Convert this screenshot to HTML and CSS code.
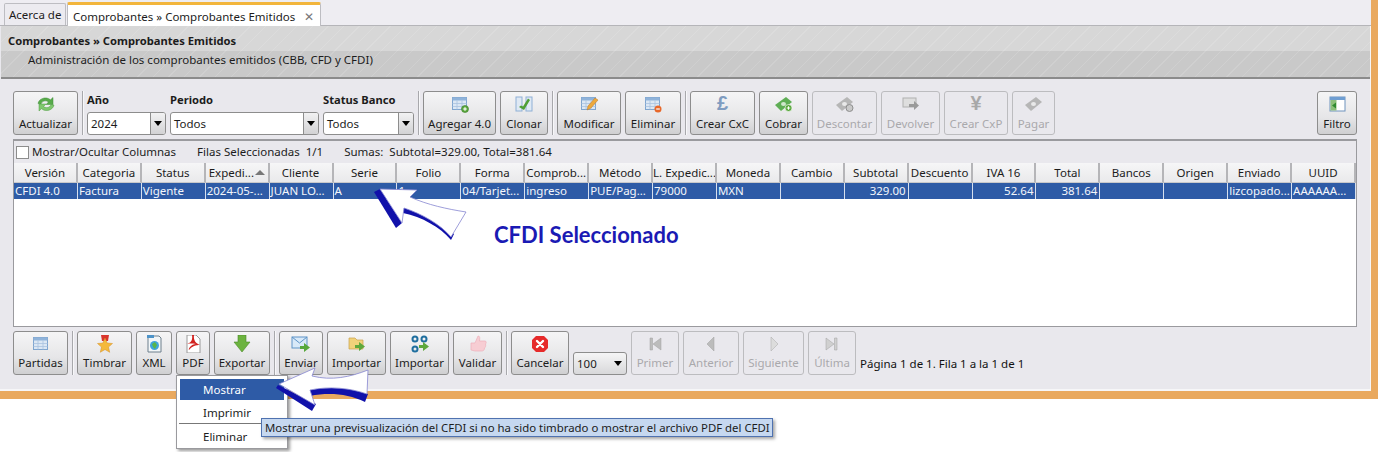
FILE: index.html
```html
<!DOCTYPE html>
<html lang="es">
<head>
<meta charset="utf-8">
<title>Comprobantes Emitidos</title>
<link rel="stylesheet" href="styles.css">
</head>
<body>
<div class="app">
  <div class="tabs">
    <div class="tab">Acerca de</div>
    <div class="tab active">Comprobantes » Comprobantes Emitidos <span class="close">✕</span></div>
  </div>
  <div class="head">
    <div class="head-title">Comprobantes » Comprobantes Emitidos</div>
    <div class="head-sub">Administración de los comprobantes emitidos (CBB, CFD y CFDI)</div>
  </div>

  <div class="toolbar top">
    <div class="btn w65"><svg class="ic" viewBox="0 0 20 18"><path d="M2 8.500C3 3.500 10 1 14.500 4.800L17 2.500V9.500H10L12.500 7C9.500 4.800 6 6 5 9z" fill="#58ab4b" stroke="#3f8c38" stroke-width=".5"/><path d="M18 10C17 15 10 17.500 5.500 13.700L3 16V9H10L7.500 11.500C10.500 13.700 14 12.500 15 9.500z" fill="#7fc86e" stroke="#4f9c42" stroke-width=".5"/></svg><span>Actualizar</span></div>
    <div class="sep"></div>
    <div class="field w79"><label>Año</label><div class="combo"><span>2024</span><i></i></div></div>
    <div class="field w149"><label>Periodo</label><div class="combo"><span>Todos</span><i></i></div></div>
    <div class="field w91"><label>Status Banco</label><div class="combo"><span>Todos</span><i></i></div></div>
    <div class="sep"></div>
    <div class="btn w73"><svg class="ic" viewBox="0 0 20 18"><use href="#tbl"/><circle cx="15" cy="14" r="3.500" fill="#5aa83e" stroke="#3c7d28" stroke-width=".6"/><path d="M13.200 14h3.600M15 12.200v3.600" stroke="#fff" stroke-width="1.200"/></svg><span>Agregar 4.0</span></div>
    <div class="btn w48"><svg class="ic" viewBox="0 0 20 18"><rect x="2" y="2" width="6" height="14" fill="#dfe9f4" stroke="#8fb0d6"/><rect x="12" y="2" width="6" height="14" fill="#dfe9f4" stroke="#8fb0d6"/><path d="M5 12l2-1.500 2 1 5-8 2 1.500-6 10z" fill="#4e9f35"/></svg><span>Clonar</span></div>
    <div class="sep"></div>
    <div class="btn w64"><svg class="ic" viewBox="0 0 20 18"><use href="#tbl"/><path d="M8 15l1-4 7-8 3 2-7 8z" fill="#eda93c" stroke="#b8772a" stroke-width=".5"/></svg><span>Modificar</span></div>
    <div class="btn w56"><svg class="ic" viewBox="0 0 20 18"><use href="#tbl"/><circle cx="15" cy="14" r="3.500" fill="#e8682a"/><path d="M13.200 14h3.600" stroke="#fff" stroke-width="1.200"/></svg><span>Eliminar</span></div>
    <div class="sep"></div>
    <div class="btn w65"><span class="cur">£</span><span>Crear CxC</span></div>
    <div class="btn w49"><svg class="ic" viewBox="0 0 20 18"><use href="#bill" fill="#5fae55"/><circle cx="14.500" cy="13" r="3.500" fill="#5aa83e" stroke="#fff" stroke-width=".6"/><path d="M12.800 13h3.400M14.500 11.300v3.400" stroke="#fff"/></svg><span>Cobrar</span></div>
    <div class="btn off w65"><svg class="ic" viewBox="0 0 20 18"><use href="#bill" fill="#b6b6b6"/><circle cx="14.500" cy="13" r="3.500" fill="#c9c9c9" stroke="#8e8e8e"/></svg><span>Descontar</span></div>
    <div class="btn off w59"><svg class="ic" viewBox="0 0 20 18"><rect x="2" y="3" width="13" height="9" fill="#dedede" stroke="#b0b0b0"/><path d="M8 9h5V6l5 4.500-5 4.500v-3H8z" fill="#9a9a9a"/></svg><span>Devolver</span></div>
    <div class="btn off w64"><span class="cur gray">¥</span><span>Crear CxP</span></div>
    <div class="btn off w43"><svg class="ic" viewBox="0 0 20 18"><use href="#bill" fill="#b6b6b6"/></svg><span>Pagar</span></div>
    <div class="btn w40 push"><svg class="ic" viewBox="0 0 20 18"><rect x="3" y="2" width="15" height="14" fill="#fff" stroke="#6f93bd"/><rect x="3" y="2" width="15" height="3" fill="#6f9ed2"/><rect x="3.500" y="5" width="6" height="10.500" fill="#8dc07a"/><path d="M9 7.500v6L5 10.500z" fill="#2f8a2f"/></svg><span>Filtro</span></div>
  </div>

  <div class="panel">
    <div class="filter">
      <span class="check"></span><span class="flabel">Mostrar/Ocultar Columnas</span>
      <span>Filas Seleccionadas&nbsp; 1/1</span>
      <span>Sumas:&nbsp; Subtotal=329.00, Total=381.64</span>
    </div>
    <div class="grid hdr">
      <div>Versión</div><div>Categoria</div><div>Status</div><div class="sort">Expedi...<i></i></div><div>Cliente</div><div>Serie</div><div>Folio</div><div>Forma</div><div>Comprob...</div><div>Método</div><div>L. Expedic...</div><div>Moneda</div><div>Cambio</div><div>Subtotal</div><div>Descuento</div><div>IVA 16</div><div>Total</div><div>Bancos</div><div>Origen</div><div>Enviado</div><div>UUID</div>
    </div>
    <div class="grid row">
      <div>CFDI 4.0</div><div>Factura</div><div>Vigente</div><div>2024-05-...</div><div>JUAN LO...</div><div>A</div><div>1</div><div>04/Tarjet...</div><div>ingreso</div><div>PUE/Pag...</div><div>79000</div><div>MXN</div><div></div><div class="num">329.00</div><div></div><div class="num">52.64</div><div class="num">381.64</div><div></div><div></div><div>lizcopado...</div><div>AAAAAA...</div>
    </div>
  </div>

  <div class="toolbar bottom">
    <div class="btn w55"><svg class="ic" viewBox="0 0 20 18"><use href="#tbl"/></svg><span>Partidas</span></div>
    <div class="sep"></div>
    <div class="btn w55"><svg class="ic" viewBox="0 0 20 18"><path d="M6 0h8l-1 6H7z" fill="#d9352c"/><path d="M10 3l2.200 5 5.300.5-4 3.500 1.200 5.300L10 14.500l-4.700 2.800L6.500 12l-4-3.500L7.800 8z" fill="#f4b93a" stroke="#d58f24" stroke-width=".5"/></svg><span>Timbrar</span></div>
    <div class="btn w36"><svg class="ic" viewBox="0 0 20 18"><path d="M4 1h11l2 2v14H4z" fill="#f2f6f8" stroke="#6d7f8c"/><circle cx="10.500" cy="10.500" r="4.500" fill="#3ea5dc"/><path d="M8 9l3-2 2 3-2 4-2-2z" fill="#58b64a"/><rect x="3" y="0" width="7" height="3" fill="#4d93c8"/></svg><span>XML</span></div>
    <div class="btn w34"><svg class="ic" viewBox="0 0 20 18"><path d="M4 0h9l4 4v14H4z" fill="#fff" stroke="#9a9a9a"/><path d="M3 8c4 1 7-2 6-8h2c-1 6 3 9 6 10-4 0-8 1-11 5-1-1 2-6 7-6-4-1-7 0-10-1z" fill="#d2231f"/></svg><span>PDF</span></div>
    <div class="btn w56"><svg class="ic" viewBox="0 0 20 18"><path d="M6 0h8v7h4l-8 10L2 7h4z" fill="#6cb33f" stroke="#4b8a2a" stroke-width=".6"/></svg><span>Exportar</span></div>
    <div class="sep"></div>
    <div class="btn w44"><svg class="ic" viewBox="0 0 20 18"><rect x="1" y="2" width="15" height="11" fill="#d8e9f8" stroke="#5e94c7"/><path d="M1 2l7.500 6L16 2" fill="none" stroke="#5e94c7"/><path d="M9 11h4V8l6 4.500L13 17v-3H9z" fill="#57a83c"/></svg><span>Enviar</span></div>
    <div class="btn w59"><svg class="ic" viewBox="0 0 20 18"><path d="M2 3h6l2 2h6v9H2z" fill="#f0d27a" stroke="#c8a04a" stroke-width=".7"/><path d="M8 10h4V7l6 4.500L12 16v-3H8z" fill="#5fa83c"/></svg><span>Importar</span></div>
    <div class="btn w59"><svg class="ic" viewBox="0 0 20 18"><g fill="none" stroke="#1f6f9f" stroke-width="2"><circle cx="5" cy="4" r="2.500"/><circle cx="14" cy="4" r="2.500"/><circle cx="5" cy="14" r="2.500"/></g><path d="M9 10h4V7l6 4.500L13 16v-3H9z" fill="#5fa83c"/></svg><span>Importar</span></div>
    <div class="btn w49"><svg class="ic" viewBox="0 0 20 18"><path d="M3 8h4l3-7c2 0 2 2 1.500 5H17c1.500 0 1.500 2 .5 3 .5 2 0 3-1 4 0 2-1 3-3 3H7l-4-1z" fill="#f7cdd3" stroke="#eeb0ba" stroke-width=".7"/></svg><span>Validar</span></div>
    <div class="sep"></div>
    <div class="btn w58"><svg class="ic" viewBox="0 0 20 18"><path d="M6 1h8l4 4v8l-4 4H6l-4-4V5z" fill="#e62a2a"/><path d="M7 6l6 6M13 6l-6 6" stroke="#fff" stroke-width="2.400" stroke-linecap="round"/></svg><span>Cancelar</span></div>
    <div class="combo page"><span>100</span><i></i></div>
    <div class="btn off w48"><svg class="ic" viewBox="0 0 20 18"><path d="M5 3h2.500v12H5zM16 3v12L8 9z" fill="#bcbcbc" stroke="#a0a0a0" stroke-width=".5"/></svg><span>Primer</span></div>
    <div class="btn off w56"><svg class="ic" viewBox="0 0 20 18"><path d="M13 2v14L6 9z" fill="#bcbcbc" stroke="#a0a0a0" stroke-width=".5"/></svg><span>Anterior</span></div>
    <div class="btn off w61"><svg class="ic" viewBox="0 0 20 18"><path d="M7 2v14l7-7z" fill="#dcdcdc" stroke="#a8a8a8" stroke-width=".5"/></svg><span>Siguiente</span></div>
    <div class="btn off w48"><svg class="ic" viewBox="0 0 20 18"><path d="M15 3h-2.500v12H15zM4 3v12l8-6z" fill="#d0d0d0" stroke="#a0a0a0" stroke-width=".5"/></svg><span>Última</span></div>
    <div class="pageinfo">Página 1 de 1. Fila 1 a la 1 de 1</div>
  </div>
</div>

<div class="menu">
  <div class="mi on">Mostrar</div>
  <div class="mi">Imprimir</div>
  <div class="mline"></div>
  <div class="mi">Eliminar</div>
</div>
<div class="tip">Mostrar una previsualización del CFDI si no ha sido timbrado o mostrar el archivo PDF del CFDI</div>
<div class="callout">CFDI Seleccionado</div>

<svg class="arrows" viewBox="0 0 1378 452" width="1378" height="452">
  <defs>
    <symbol id="tbl" viewBox="0 0 20 18"><rect x="2.500" y="2.500" width="14" height="12" fill="#dbe7f4" stroke="#7fa5cf"/><rect x="2.500" y="2.500" width="14" height="3" fill="#8fb3da"/><path d="M2.500 8.500h14M2.500 11.500h14M7 5.500v9M12 5.500v9" stroke="#a9c3e0" stroke-width=".8"/></symbol>
    <symbol id="bill" viewBox="0 0 20 18"><path d="M1 10L12 2L18 7L7 16Z"/><ellipse cx="9.500" cy="9" rx="2.500" ry="2" fill="#fff" opacity=".7"/></symbol>
  </defs>
  <path d="M374 192L380 189L402 223L396 228Z" fill="#1111aa"/>
  <path d="M403 207C422 213 442 222 454 234L451 240C440 227 422 217 403 213Z" fill="#1111aa"/>
  <path d="M380 189L417 190L410 197C428 205 447 209 466 212L451 237C440 224 422 214 404 208L402 223Z" fill="#fff" stroke="#8585d0" stroke-width=".8"/>
  <path d="M278 385L316 404L312 411L276 388Z" fill="#1111aa"/>
  <path d="M310 390C330 385 352 388 368 394L365 402C348 394 330 392 310 396Z" fill="#1111aa"/>
  <path d="M279 384L315 368L312 376C332 381 350 377 368 370L367 394C350 388 330 386 310 390L315 405Z" fill="#fff" stroke="#8585d0" stroke-width=".8"/>
</svg>
</body>
</html>
```
FILE: styles.css
```css
* { box-sizing: border-box; }
html, body { margin: 0; padding: 0; }
body {
  width: 1378px;
  height: 452px;
  overflow: hidden;
  background: #fff;
  position: relative;
  font: 11.500px/16px "Noto Sans", "Liberation Sans", sans-serif;
  color: #1c1c1c;
}
.app {
  width: 1378px;
  height: 399px;
  background: #e9e8ed;
  border-right: 7px solid #e9a95f;
  border-bottom: 8px solid #e9a95f;
  box-shadow: inset -1px -2px 0 #f6f6f8;
}
.tabs {
  height: 26px;
  padding: 2px 0 0 4px;
  display: flex;
  align-items: flex-end;
  gap: 1px;
  background: #eeedf2;
  border-bottom: 1px solid #b5b5b9;
}
.tab {
  height: 22px;
  padding: 3px 4px 0;
  width: 62px;
  white-space: nowrap;
  background: #ecebf0;
  border: 1px solid #bdbdc2;
  border-bottom: 0;
  border-radius: 2px 2px 0 0;
}
.tab.active {
  width: 254px;
  height: 24px;
  padding: 4px 5px 0;
  background: #fff;
  border-top: 3px solid #f2b53c;
  position: relative;
  top: 1px;
}
.close { color: #777; margin-left: 6px; font-size: 12px; }
.head {
  height: 53px;
  margin-right: 1px;
  margin-left: 1px;
  border-bottom: 2px solid #8b8b8b;
  background:
    repeating-linear-gradient(135deg, rgba(255,255,255,.12) 0 1px, rgba(255,255,255,0) 1px 11px),
    linear-gradient(#d7d7d7 0 49%, #c9c9c9 49% 100%);
}
.head-title { padding: 7px 0 0 7px; font-weight: 700; font-size: 11.200px; line-height: 16px; }
.head-sub { padding: 3px 0 0 27px; line-height: 16px; }
.toolbar { display: flex; gap: 4px; padding-left: 13px; padding-right: 14px; }
.toolbar.top { margin-top: 12px; height: 44px; }
.toolbar.bottom { margin-top: 4px; height: 44px; }
.sep { width: 1px; background: #a8a8ac; box-shadow: 1px 0 0 #f7f7f9; }
.btn {
  height: 44px;
  flex: none;
  display: flex;
  flex-direction: column;
  align-items: center;
  justify-content: flex-end;
  padding-bottom: 2px;
  border: 1px solid #8d8d8d;
  border-radius: 3px;
  background: linear-gradient(#f5f5f6, #e6e6e8 60%, #cfcfd1);
  white-space: nowrap;
  position: relative;
}
.btn.off {
  background: transparent;
  border-color: #bcbcbf;
  color: #a9a9ac;
}
.toolbar.bottom .btn { padding-bottom: 3px; }
.ic { position: absolute; top: 3px; left: 50%; margin-left: -10px; width: 20px; height: 18px; }
.cur {
  position: absolute;
  top: 0;
  left: 0;
  right: 0;
  text-align: center;
  font: 700 20px/22px "Liberation Sans", sans-serif;
  color: #7f9cc0;
}
.cur.gray { color: #a8a8a8; }
.push { margin-left: auto; }
.w34 { width: 34px; } .w36 { width: 36px; } .w40 { width: 40px; } .w43 { width: 43px; }
.w44 { width: 44px; } .w48 { width: 48px; } .w49 { width: 49px; } .w55 { width: 55px; }
.w56 { width: 56px; } .w58 { width: 58px; } .w59 { width: 59px; } .w61 { width: 61px; }
.w64 { width: 64px; } .w65 { width: 65px; } .w73 { width: 73px; } .w79 { width: 79px; }
.w91 { width: 91px; } .w149 { width: 149px; }
.field { display: flex; flex-direction: column; justify-content: space-between; flex: none; }
.field label { font-weight: 700; font-size: 11.200px; line-height: 18px; }
.combo {
  height: 23px;
  display: flex;
  border: 1px solid #8d8d8d;
  border-radius: 3px;
  background: #fff;
  overflow: hidden;
}
.combo span { flex: 1; padding: 3px 0 0 3px; line-height: 16px; }
.combo i {
  width: 15px;
  flex: none;
  border-left: 1px solid #8d8d8d;
  background: linear-gradient(#f2f2f3, #d2d2d4);
  position: relative;
}
.combo i::after {
  content: "";
  position: absolute;
  left: 3px;
  top: 8px;
  border: 4px solid transparent;
  border-top: 5px solid #000;
  border-bottom: 0;
}
.combo.page { width: 54px; flex: none; align-self: flex-end; background: linear-gradient(#f5f5f6, #d8d8da); }
.combo.page i { background: none; border-left: 0; }
.panel {
  margin: 4px 14px 0 13px;
  height: 188px;
  border: 1px solid #9a9a9e;
  border-top-width: 2px;
  background: #fff;
}
.filter {
  height: 22px;
  padding-left: 2px;
  background: #e9e8ed;
  display: flex;
  align-items: center;
  gap: 21px;
  white-space: nowrap;
}
.check {
  width: 13px;
  height: 13px;
  background: #fff;
  border: 1px solid #8d8d8d;
  margin-right: -18px;
  flex: none;
}
.grid { display: grid; grid-template-columns: repeat(21, 1fr); white-space: nowrap; }
.grid > div { overflow: hidden; min-width: 0; }
.hdr { height: 20px; }
.hdr > div {
  text-align: center;
  line-height: 19px;
  background: linear-gradient(#f6f6f7, #e9e9eb);
  border-right: 2px solid #b5b5b8;
  border-bottom: 1px solid #c8c8ca;
}
.hdr .sort { text-align: left; padding-left: 3px; position: relative; }
.sort i {
  position: absolute;
  right: 3px;
  top: 7px;
  border: 5px solid transparent;
  border-bottom: 5px solid #777;
  border-top: 0;
}
.row { height: 16px; background: #2e5ba6; color: #f3f6fb; }
.row > div { line-height: 16px; padding-left: 1px; border-right: 1px solid #d7e0ee; }
.row .num { text-align: right; padding-right: 2px; }
.pageinfo { align-self: flex-end; padding-bottom: 3px; white-space: nowrap; color: #111; }
.menu {
  position: absolute;
  left: 176px;
  top: 375px;
  width: 112px;
  height: 74px;
  padding: 3px;
  background: #fff;
  border: 1px solid #9a9a9e;
  box-shadow: 2px 2px 3px rgba(0,0,0,.4);
}
.mi { height: 21px; line-height: 21px; padding-left: 23px; }
.mi.on { background: #2e5ba6; color: #fff; height: 21px; line-height: 21px; margin-bottom: 2px; }
.mline { height: 1px; background: #777; margin: 0 -1px 2px; }
.tip {
  position: absolute;
  left: 261px;
  top: 418px;
  height: 19px;
  width: 512px;
  padding-left: 3px;
  font-size: 11.380px;
  line-height: 17px;
  background: #c6d8f0;
  border: 1px solid #4f72b0;
  box-shadow: 2px 2px 3px rgba(0,0,0,.35);
  white-space: nowrap;
}
.callout {
  position: absolute;
  left: 494px;
  top: 221px;
  font: 700 22px/28px Lato, "Noto Sans", sans-serif;
  color: #1a1ab4;
  white-space: nowrap;
}
.arrows { position: absolute; left: 0; top: 0; pointer-events: none; }
```
